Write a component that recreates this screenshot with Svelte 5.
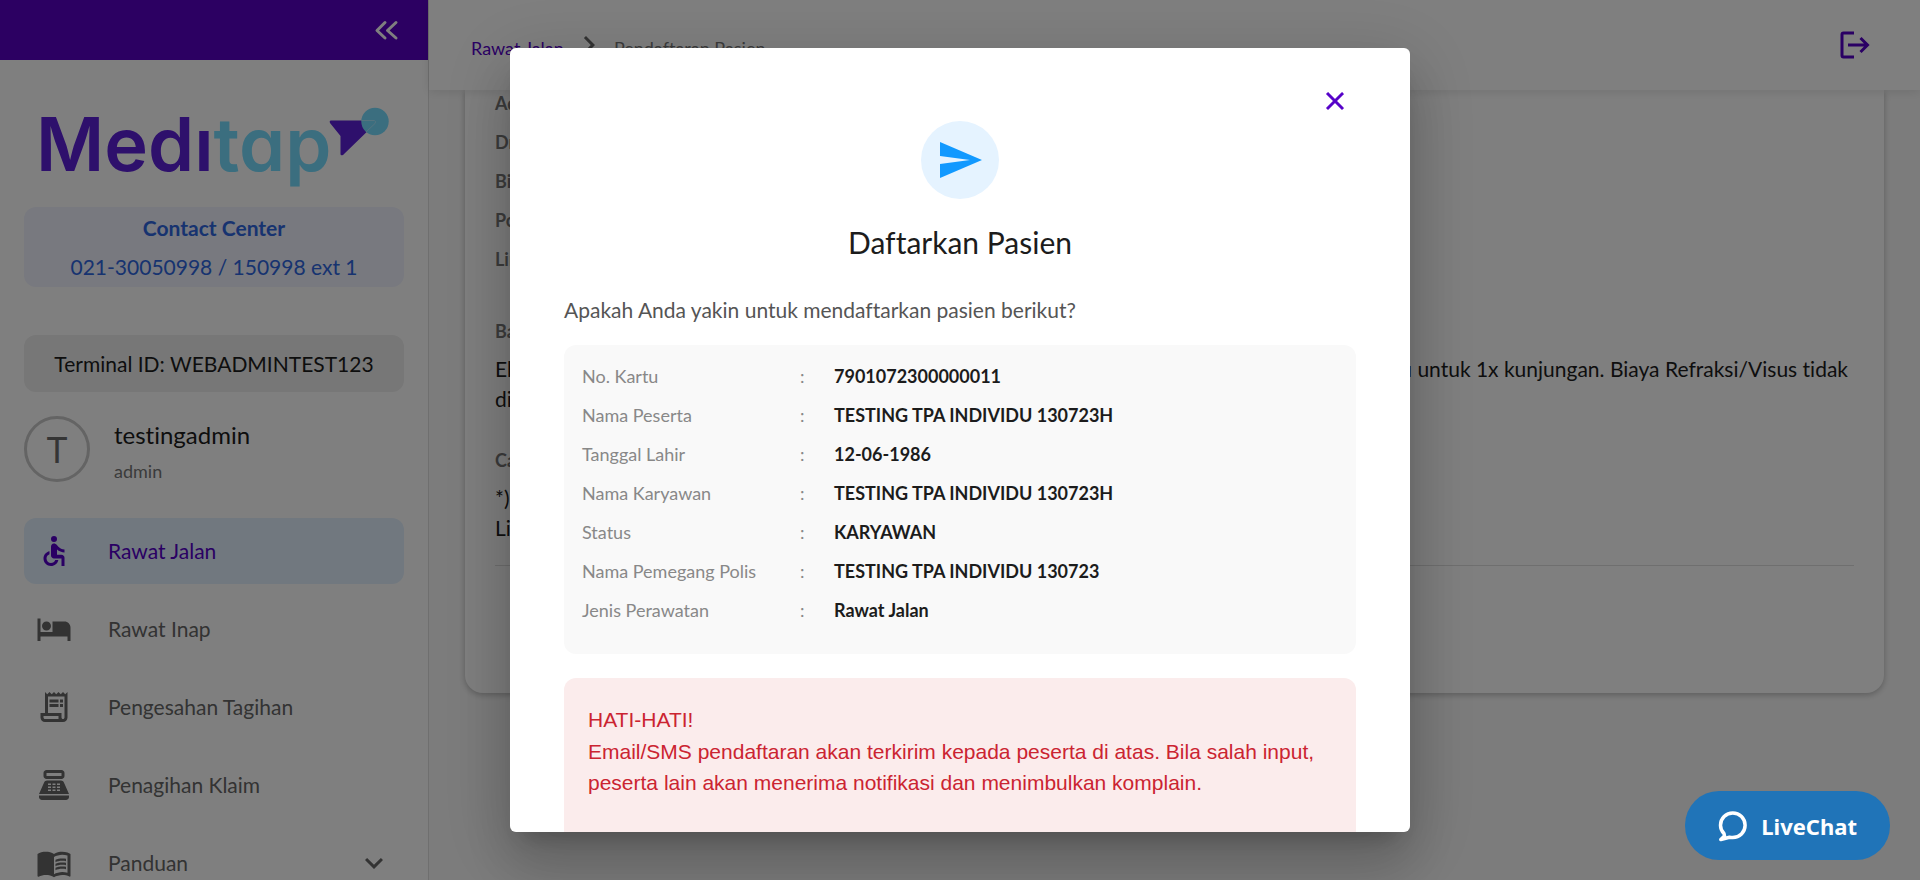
<script>
  const icons = {
    wheelchair:
      'M12 2a2 2 0 1 1 0 4 2 2 0 0 1 0-4zM19 13v-2c-1.54.02-3.09-.75-4.07-1.83l-1.29-1.43c-.17-.19-.38-.34-.61-.45-.01 0-.01-.01-.02-.01H13c-.35-.2-.75-.3-1.19-.26C10.76 7.11 10 8.04 10 9.09V15c0 1.1.9 2 2 2h5v5h2v-5.5c0-1.1-.9-2-2-2h-3v-3.45c1.29 1.07 3.25 1.94 5 1.95zm-6.17 5c-.41 1.16-1.52 2-2.83 2-1.66 0-3-1.34-3-3 0-1.31.84-2.41 2-2.83V12.1c-2.28.46-4 2.48-4 4.9 0 2.76 2.24 5 5 5 2.42 0 4.44-1.72 4.9-4h-2.07z',
    bed: 'M7 13c1.66 0 3-1.34 3-3S8.66 7 7 7s-3 1.34-3 3 1.34 3 3 3zm12-6h-8v7H3V5H1v15h2v-3h18v3h2v-9c0-2.21-1.79-4-4-4z',
    receipt:
      'M19.5 3.5 18 2l-1.5 1.5L15 2l-1.5 1.5L12 2l-1.5 1.5L9 2 7.5 3.5 6 2v14H3v3c0 1.66 1.34 3 3 3h12c1.66 0 3-1.34 3-3V2l-1.5 1.5zM15 20H6c-.55 0-1-.45-1-1v-1h10v2zm4-1c0 .55-.45 1-1 1s-1-.45-1-1v-3H8V5h11v14zM9 7h6v2H9zM16 7h2v2h-2zM9 10h6v2H9zM16 10h2v2h-2z',
    register:
      'M17 2H7c-1.1 0-2 .9-2 2v2c0 1.1.9 2 2 2h10c1.1 0 2-.9 2-2V4c0-1.1-.9-2-2-2zm0 4H7V4h10v2zm3 16H4c-1.1 0-2-.9-2-2v-1h20v1c0 1.1-.9 2-2 2zm-1.47-11.81C18.21 9.47 17.49 9 16.7 9H7.3c-.79 0-1.51.47-1.83 1.19L2 18h20l-3.47-7.81zM8 11h2v1H8zM11 11h2v1h-2zM14 11h2v1h-2zM8 13h2v1H8zM11 13h2v1h-2zM14 13h2v1h-2zM8 15h2v1H8zM11 15h2v1h-2zM14 15h2v1h-2z',
    book: 'M21 5c-1.11-.35-2.33-.5-3.5-.5-1.95 0-4.05.4-5.5 1.5-1.45-1.1-3.55-1.5-5.5-1.5S2.45 4.9 1 6v14.65c0 .25.25.5.5.5.1 0 .15-.05.25-.05C3.1 20.45 5.05 20 6.5 20c1.95 0 4.05.4 5.5 1.5 1.35-.85 3.8-1.5 5.5-1.5 1.65 0 3.35.3 4.75 1.05.1.05.15.05.25.05.25 0 .5-.25.5-.5V6c-.6-.45-1.25-.75-2-1zm0 13.5c-1.1-.35-2.3-.5-3.5-.5-1.7 0-4.15.65-5.5 1.5V8c1.35-.85 3.8-1.5 5.5-1.5 1.2 0 2.4.15 3.5.5v11.5zM17.5 10.5c.88 0 1.73.09 2.5.26V9.24c-.79-.15-1.64-.24-2.5-.24-1.7 0-3.24.29-4.5.83v1.66c1.13-.64 2.7-.99 4.5-.99zM13 12.49v1.66c1.13-.64 2.7-.99 4.5-.99.88 0 1.73.09 2.5.26V11.9c-.79-.15-1.64-.24-2.5-.24-1.7 0-3.24.3-4.5.83zM17.5 14.33c-1.7 0-3.24.29-4.5.83v1.66c1.13-.64 2.7-.99 4.5-.99.88 0 1.73.09 2.5.26v-1.52c-.79-.16-1.64-.24-2.5-.24z'
  };

  const menu = [
    { label: 'Rawat Jalan', icon: icons.wheelchair, active: true },
    { label: 'Rawat Inap', icon: icons.bed },
    { label: 'Pengesahan Tagihan', icon: icons.receipt },
    { label: 'Penagihan Klaim', icon: icons.register },
    { label: 'Panduan', icon: icons.book, expandable: true }
  ];

  const details = ['Admisi', 'Dr.', 'Biaya', 'Poli', 'Limit'];

  const patient = [
    ['No. Kartu', '7901072300000011'],
    ['Nama Peserta', 'TESTING TPA INDIVIDU 130723H'],
    ['Tanggal Lahir', '12-06-1986'],
    ['Nama Karyawan', 'TESTING TPA INDIVIDU 130723H'],
    ['Status', 'KARYAWAN'],
    ['Nama Pemegang Polis', 'TESTING TPA INDIVIDU 130723'],
    ['Jenis Perawatan', 'Rawat Jalan']
  ];
</script>

<div class="app">
  <aside class="sidebar">
    <div class="topbar">
      <button class="plain" aria-label="Tutup menu">
        <svg width="36" height="36" viewBox="0 0 36 36" fill="none" stroke="#fff" stroke-width="3" stroke-linecap="round" stroke-linejoin="round">
          <path d="M17 10.500 9 18.500l8 7.500M28 10.500l-8.500 8 8.500 7.500" />
        </svg>
      </button>
    </div>
    <div class="side-body">
      <div class="logo" role="img" aria-label="Meditap">
        <span class="word"><span class="dark">Medı</span><span class="light">tap</span></span>
        <svg class="mark" width="60" height="50" viewBox="0 0 60 50">
          <path d="M1.500 13.500H46.500l1 2L14 48q-2.500 1-2.500-1V29L1 16q-1-2 .500-2.500z" fill="#5c20d8" />
          <circle cx="46" cy="14.500" r="13.700" fill="#76dcff" />
          <path d="M32.500 13.500H45.500q2 1 .500 3L37 25" fill="none" stroke="#a8e8ff" />
        </svg>
      </div>

      <div class="contact">
        <strong>Contact Center</strong>
        <span>021-30050998 / 150998 ext 1</span>
      </div>
      <div class="terminal">Terminal ID: WEBADMINTEST123</div>

      <div class="user">
        <div class="avatar">T</div>
        <div class="who">
          <span class="name">testingadmin</span>
          <span class="role">admin</span>
        </div>
      </div>

      <nav>
        {#each menu as item}
          <a href="#menu" class="item" class:active={item.active}>
            <svg width="36" height="36" viewBox="0 0 24 24" fill="currentColor" fill-rule="evenodd"><path d={item.icon} /></svg>
            <span class="label">{item.label}</span>
            {#if item.expandable}
              <svg width="36" height="36" viewBox="0 0 24 24" fill="currentColor"><path d="M7.410 8.590 12 13.170l4.590-4.580L18 10l-6 6-6-6z" /></svg>
            {/if}
          </a>
        {/each}
      </nav>
    </div>
  </aside>

  <div class="main">
    <header class="header">
      <div class="crumbs">
        <a href="#rawat-jalan">Rawat Jalan</a>
        <svg width="36" height="36" viewBox="0 0 24 24" fill="#666"><path d="M10 6 8.590 7.410 13.170 12l-4.580 4.590L10 18l6-6z" /></svg>
        <span>Pendaftaran Pasien</span>
      </div>
      <button class="plain" aria-label="Keluar">
        <svg width="36" height="36" viewBox="0 0 36 36" fill="none" stroke="#5500c8" stroke-width="3">
          <path d="M18 6H7.500q-1.500 0-1.500 1.500v21q0 1.500 1.500 1.500H18" />
          <path d="M12 18h20M24.500 11l7 7-7 7" />
        </svg>
      </button>
    </header>

    <section class="card">
      {#each details as d}
        <div class="field">{d}</div>
      {/each}
      <h3>Batas</h3>
      <div class="note">
        <div class="split"><span>Ekses</span><span>baru untuk 1x kunjungan. Biaya Refraksi/Visus tidak</span></div>
        <div>dijamin</div>
      </div>
      <h3>Catatan</h3>
      <div class="note">
        <div>*) Limit</div>
        <div>Limit</div>
      </div>
      <hr />
    </section>
  </div>

  <div class="backdrop">
    <div class="dialog" role="dialog" aria-modal="true" aria-labelledby="dialog-title">
      <div class="close-row">
        <button class="plain close" aria-label="Tutup">
          <svg width="30" height="30" viewBox="0 0 24 24" fill="#5500c8" stroke="#5500c8" stroke-width=".4"><path d="M19 6.410 17.590 5 12 10.590 6.410 5 5 6.410 10.590 12 5 17.590 6.410 19 12 13.410 17.590 19 19 17.590 13.410 12z" /></svg>
        </button>
      </div>
      <div class="badge">
        <svg width="48" height="48" viewBox="0 0 24 24" fill="#1199ff"><path d="M2.010 21 23 12 2.010 3 2 10l15 2-15 2z" /></svg>
      </div>
      <h2 id="dialog-title">Daftarkan Pasien</h2>
      <p class="question">Apakah Anda yakin untuk mendaftarkan pasien berikut?</p>

      <div class="panel">
        <table>
          <tbody>
            {#each patient as [label, value]}
              <tr>
                <th scope="row">{label}</th>
                <td class="colon">:</td>
                <td class="value">{value}</td>
              </tr>
            {/each}
          </tbody>
        </table>
      </div>

      <div class="warning">
        HATI-HATI!<br />
        Email/SMS pendaftaran akan terkirim kepada peserta di atas. Bila salah input, peserta lain akan menerima notifikasi dan menimbulkan komplain.
      </div>
    </div>
  </div>

  <button class="livechat">
    <svg width="30" height="32" viewBox="0 0 30 32" fill="none" stroke="#fff" stroke-width="3.5" stroke-linejoin="round">
      <path d="M6 23.500C3.500 21 2.500 18 2.500 15.200a12.300 12.300 0 1 1 12.300 12.300q-2 0-3.300-.300L2.800 29.500 6.500 26z" />
    </svg>
    <span>LiveChat</span>
  </button>
</div>

<style>
  :global(body) {
    margin: 0;
    overflow: hidden;
  }
  .app {
    display: flex;
    height: 100vh;
    overflow: hidden;
    font-family: Lato, 'Liberation Sans', sans-serif;
    font-size: 21px;
    line-height: 30px;
    font-variant-ligatures: none;
    color: #1c1c1c;
    background: #f9f9f9;
  }
  .app * {
    box-sizing: border-box;
  }
  .plain {
    display: flex;
    align-items: center;
    justify-content: center;
    padding: 0;
    border: 0;
    background: none;
    cursor: pointer;
  }
  svg {
    display: block;
    flex: none;
  }

  .sidebar {
    flex: none;
    width: 429px;
    height: 100%;
    overflow: hidden;
    background: #fff;
    border-right: 1px solid #dedede;
  }
  .topbar {
    display: flex;
    align-items: center;
    justify-content: flex-end;
    height: 60px;
    padding-right: 24px;
    background: #5800c4;
  }
  .side-body {
    display: flex;
    flex-direction: column;
    padding: 45px 24px 0;
  }
  .logo {
    display: flex;
    height: 102px;
    padding-left: 12px;
  }
  .word {
    font-family: Inter, sans-serif;
    font-size: 74px;
    font-weight: 600;
    line-height: 78px;
    font-feature-settings: 'cv11';
  }
  .dark {
    color: #5c20d8;
  }
  .light {
    color: #76dcff;
  }
  .mark {
    margin: 2px 0 0 -2px;
  }
  .contact {
    display: flex;
    flex-direction: column;
    align-items: center;
    padding: 1px 0;
    border-radius: 12px;
    background: #f0f2fe;
    color: #2f66e0;
    line-height: 39px;
  }
  .terminal {
    margin-top: 48px;
    border-radius: 12px;
    background: #eee;
    text-align: center;
    line-height: 57px;
  }
  .user {
    display: flex;
    gap: 24px;
    height: 66px;
    margin-top: 24px;
  }
  .avatar {
    width: 66px;
    height: 66px;
    border: 3px solid #c8c8c8;
    border-radius: 50%;
    color: #6b6b6b;
    font-family: Roboto, sans-serif;
    font-size: 36px;
    line-height: 64px;
    text-align: center;
  }
  .who {
    display: flex;
    flex-direction: column;
    line-height: 37px;
  }
  .name {
    font-size: 24px;
  }
  .role {
    font-size: 18px;
    color: #777;
  }
  nav {
    display: flex;
    flex-direction: column;
    gap: 12px;
    margin-top: 36px;
  }
  .item {
    display: flex;
    align-items: center;
    gap: 36px;
    height: 66px;
    padding: 0 12px;
    border-radius: 12px;
    color: #666;
    text-decoration: none;
  }
  .label {
    flex: 1;
  }
  .active {
    background: #e3f1fe;
    color: #5500c8;
  }

  .main {
    flex: 1;
    min-width: 0;
  }
  .header {
    position: relative;
    z-index: 1;
    display: flex;
    align-items: center;
    justify-content: space-between;
    height: 90px;
    padding: 0 48px 0 42px;
    background: #fff;
    box-shadow: 0 2px 10px rgba(0, 0, 0, 0.1);
  }
  .crumbs {
    display: flex;
    align-items: center;
    gap: 7px;
    font-size: 18px;
    color: #777;
  }
  .crumbs a,
  .crumbs span {
    padding-top: 5px;
  }
  .crumbs a {
    color: #5500c8;
    text-decoration: none;
  }
  .card {
    margin: 0 36px;
    height: 603px;
    padding: 0 30px;
    border-radius: 0 0 18px 18px;
    background: #fff;
    box-shadow: 0 2px 6px rgba(0, 0, 0, 0.25);
  }
  .field {
    height: 39px;
    font-size: 18px;
    font-weight: 700;
    line-height: 26px;
    color: #777;
  }
  h3 {
    margin: 31px 0 0;
    font-size: 18px;
    line-height: 30px;
    color: #777;
  }
  .note {
    margin-top: 8px;
  }
  .split {
    display: flex;
    justify-content: space-between;
    padding-right: 6px;
  }
  hr {
    margin: 22px 0 0;
    border: 0;
    border-top: 1px solid #dedede;
  }

  .backdrop {
    position: fixed;
    inset: 0;
    z-index: 2;
    display: flex;
    align-items: center;
    justify-content: center;
    padding: 48px;
    background: rgba(0, 0, 0, 0.5);
  }
  .dialog {
    width: 900px;
    max-width: 100%;
    max-height: 100%;
    padding: 33px 54px 48px;
    overflow-y: auto;
    scrollbar-width: none;
    border-radius: 6px;
    background: #fff;
    box-shadow:
      0 16px 22px -10px rgba(0, 0, 0, 0.2),
      0 36px 57px 4px rgba(0, 0, 0, 0.14),
      0 14px 69px 12px rgba(0, 0, 0, 0.12);
  }
  .close-row {
    display: flex;
    justify-content: flex-end;
  }
  .close {
    width: 42px;
    height: 40px;
  }
  .badge {
    display: flex;
    align-items: center;
    justify-content: center;
    width: 78px;
    height: 78px;
    margin: 0 auto;
    border-radius: 50%;
    background: #e5f3ff;
  }
  h2 {
    margin: 22px 0 0;
    font-size: 30px;
    font-weight: 400;
    line-height: 42px;
    text-align: center;
  }
  .question {
    margin: 32px 0 0;
    color: #555;
  }
  .panel {
    margin-top: 20px;
    padding: 12px 18px 24px;
    border-radius: 12px;
    background: #f9f9f9;
  }
  table {
    width: 100%;
    border-collapse: collapse;
    font-size: 18px;
    line-height: 39px;
  }
  th,
  td {
    padding: 0;
    text-align: left;
    font-weight: 400;
    color: #888;
  }
  th {
    width: 218px;
  }
  .colon {
    width: 34px;
  }
  .value {
    font-weight: 700;
    color: #1c1c1c;
  }
  .warning {
    margin-top: 24px;
    padding: 26px 24px 48px;
    border-radius: 12px;
    background: #fbecec;
    color: #cb2431;
    font-family: 'Liberation Sans', Arial, sans-serif;
    font-variant-ligatures: normal;
    line-height: 1.5;
  }

  .livechat {
    position: fixed;
    right: 30px;
    bottom: 20px;
    z-index: 3;
    display: flex;
    align-items: center;
    gap: 13px;
    height: 69px;
    padding: 0 33px;
    border: 0;
    border-radius: 34px;
    background: #2074b8;
    color: #fff;
    font-family: 'Noto Sans', sans-serif;
    font-size: 22px;
    font-weight: 700;
    cursor: pointer;
  }
</style>
